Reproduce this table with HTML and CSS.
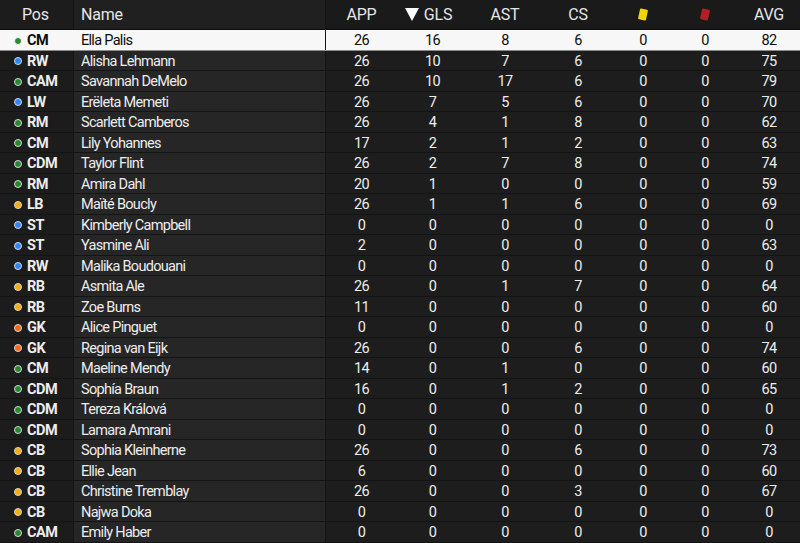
FILE: index.html
```html
<!DOCTYPE html>
<html>
<head>
<meta charset="utf-8">
<link rel="stylesheet" href="styles.css">
</head>
<body>
<div class="table">
  <div class="row head">
    <div class="c pos">Pos</div>
    <div class="c name">Name</div>
    <div class="c n">APP</div>
    <div class="c n sorted"><span class="tri"></span>GLS</div>
    <div class="c n">AST</div>
    <div class="c n">CS</div>
    <div class="c n"><span class="card yellow"></span></div>
    <div class="c n"><span class="card red"></span></div>
    <div class="c n">AVG</div>
  </div>
  <div class="row sel"><div class="c pos"><span class="dot g"></span>CM</div><div class="c name">Ella Palis</div><div class="c n">26</div><div class="c n">16</div><div class="c n">8</div><div class="c n">6</div><div class="c n">0</div><div class="c n">0</div><div class="c n">82</div></div>
  <div class="row"><div class="c pos"><span class="dot b"></span>RW</div><div class="c name">Alisha Lehmann</div><div class="c n">26</div><div class="c n">10</div><div class="c n">7</div><div class="c n">6</div><div class="c n">0</div><div class="c n">0</div><div class="c n">75</div></div>
  <div class="row"><div class="c pos"><span class="dot g"></span>CAM</div><div class="c name">Savannah DeMelo</div><div class="c n">26</div><div class="c n">10</div><div class="c n">17</div><div class="c n">6</div><div class="c n">0</div><div class="c n">0</div><div class="c n">79</div></div>
  <div class="row"><div class="c pos"><span class="dot b"></span>LW</div><div class="c name">Erëleta Memeti</div><div class="c n">26</div><div class="c n">7</div><div class="c n">5</div><div class="c n">6</div><div class="c n">0</div><div class="c n">0</div><div class="c n">70</div></div>
  <div class="row"><div class="c pos"><span class="dot g"></span>RM</div><div class="c name">Scarlett Camberos</div><div class="c n">26</div><div class="c n">4</div><div class="c n">1</div><div class="c n">8</div><div class="c n">0</div><div class="c n">0</div><div class="c n">62</div></div>
  <div class="row"><div class="c pos"><span class="dot g"></span>CM</div><div class="c name">Lily Yohannes</div><div class="c n">17</div><div class="c n">2</div><div class="c n">1</div><div class="c n">2</div><div class="c n">0</div><div class="c n">0</div><div class="c n">63</div></div>
  <div class="row"><div class="c pos"><span class="dot g"></span>CDM</div><div class="c name">Taylor Flint</div><div class="c n">26</div><div class="c n">2</div><div class="c n">7</div><div class="c n">8</div><div class="c n">0</div><div class="c n">0</div><div class="c n">74</div></div>
  <div class="row"><div class="c pos"><span class="dot g"></span>RM</div><div class="c name">Amira Dahl</div><div class="c n">20</div><div class="c n">1</div><div class="c n">0</div><div class="c n">0</div><div class="c n">0</div><div class="c n">0</div><div class="c n">59</div></div>
  <div class="row"><div class="c pos"><span class="dot y"></span>LB</div><div class="c name">Maïté Boucly</div><div class="c n">26</div><div class="c n">1</div><div class="c n">1</div><div class="c n">6</div><div class="c n">0</div><div class="c n">0</div><div class="c n">69</div></div>
  <div class="row"><div class="c pos"><span class="dot b"></span>ST</div><div class="c name">Kimberly Campbell</div><div class="c n">0</div><div class="c n">0</div><div class="c n">0</div><div class="c n">0</div><div class="c n">0</div><div class="c n">0</div><div class="c n">0</div></div>
  <div class="row"><div class="c pos"><span class="dot b"></span>ST</div><div class="c name">Yasmine Ali</div><div class="c n">2</div><div class="c n">0</div><div class="c n">0</div><div class="c n">0</div><div class="c n">0</div><div class="c n">0</div><div class="c n">63</div></div>
  <div class="row"><div class="c pos"><span class="dot b"></span>RW</div><div class="c name">Malika Boudouani</div><div class="c n">0</div><div class="c n">0</div><div class="c n">0</div><div class="c n">0</div><div class="c n">0</div><div class="c n">0</div><div class="c n">0</div></div>
  <div class="row"><div class="c pos"><span class="dot y"></span>RB</div><div class="c name">Asmita Ale</div><div class="c n">26</div><div class="c n">0</div><div class="c n">1</div><div class="c n">7</div><div class="c n">0</div><div class="c n">0</div><div class="c n">64</div></div>
  <div class="row"><div class="c pos"><span class="dot y"></span>RB</div><div class="c name">Zoe Burns</div><div class="c n">11</div><div class="c n">0</div><div class="c n">0</div><div class="c n">0</div><div class="c n">0</div><div class="c n">0</div><div class="c n">60</div></div>
  <div class="row"><div class="c pos"><span class="dot o"></span>GK</div><div class="c name">Alice Pinguet</div><div class="c n">0</div><div class="c n">0</div><div class="c n">0</div><div class="c n">0</div><div class="c n">0</div><div class="c n">0</div><div class="c n">0</div></div>
  <div class="row"><div class="c pos"><span class="dot o"></span>GK</div><div class="c name">Regina van Eijk</div><div class="c n">26</div><div class="c n">0</div><div class="c n">0</div><div class="c n">6</div><div class="c n">0</div><div class="c n">0</div><div class="c n">74</div></div>
  <div class="row"><div class="c pos"><span class="dot g"></span>CM</div><div class="c name">Maeline Mendy</div><div class="c n">14</div><div class="c n">0</div><div class="c n">1</div><div class="c n">0</div><div class="c n">0</div><div class="c n">0</div><div class="c n">60</div></div>
  <div class="row"><div class="c pos"><span class="dot g"></span>CDM</div><div class="c name">Sophía Braun</div><div class="c n">16</div><div class="c n">0</div><div class="c n">1</div><div class="c n">2</div><div class="c n">0</div><div class="c n">0</div><div class="c n">65</div></div>
  <div class="row"><div class="c pos"><span class="dot g"></span>CDM</div><div class="c name">Tereza Králová</div><div class="c n">0</div><div class="c n">0</div><div class="c n">0</div><div class="c n">0</div><div class="c n">0</div><div class="c n">0</div><div class="c n">0</div></div>
  <div class="row"><div class="c pos"><span class="dot g"></span>CDM</div><div class="c name">Lamara Amrani</div><div class="c n">0</div><div class="c n">0</div><div class="c n">0</div><div class="c n">0</div><div class="c n">0</div><div class="c n">0</div><div class="c n">0</div></div>
  <div class="row"><div class="c pos"><span class="dot y"></span>CB</div><div class="c name">Sophia Kleinherne</div><div class="c n">26</div><div class="c n">0</div><div class="c n">0</div><div class="c n">6</div><div class="c n">0</div><div class="c n">0</div><div class="c n">73</div></div>
  <div class="row"><div class="c pos"><span class="dot y"></span>CB</div><div class="c name">Ellie Jean</div><div class="c n">6</div><div class="c n">0</div><div class="c n">0</div><div class="c n">0</div><div class="c n">0</div><div class="c n">0</div><div class="c n">60</div></div>
  <div class="row"><div class="c pos"><span class="dot y"></span>CB</div><div class="c name">Christine Tremblay</div><div class="c n">26</div><div class="c n">0</div><div class="c n">0</div><div class="c n">3</div><div class="c n">0</div><div class="c n">0</div><div class="c n">67</div></div>
  <div class="row"><div class="c pos"><span class="dot y"></span>CB</div><div class="c name">Najwa Doka</div><div class="c n">0</div><div class="c n">0</div><div class="c n">0</div><div class="c n">0</div><div class="c n">0</div><div class="c n">0</div><div class="c n">0</div></div>
  <div class="row"><div class="c pos"><span class="dot g"></span>CAM</div><div class="c name">Emily Haber</div><div class="c n">0</div><div class="c n">0</div><div class="c n">0</div><div class="c n">0</div><div class="c n">0</div><div class="c n">0</div><div class="c n">0</div></div>
</div>
</body>
</html>
```
FILE: styles.css
```css
html, body {
  margin: 0;
  padding: 0;
  background: #1b1b1b;
}
body {
  font-family: Roboto, "Liberation Sans", sans-serif;
  color: #ededed;
  width: 800px;
  height: 543px;
  overflow: hidden;
}
.table {
  display: flex;
  flex-direction: column;
}
.row {
  display: grid;
  grid-template-columns: 73px 252px 72px 71px 74px 72px 58px 66px 62px;
  height: 20.5px;
  box-sizing: border-box;
  border-bottom: 1px solid #141414;
  font-size: 14.5px;
  letter-spacing: -0.7px;
}
.c {
  display: flex;
  align-items: center;
  background: #1d1d1d;
  white-space: nowrap;
  box-sizing: border-box;
  padding-top: 2px;
}
.c.name {
  background: #262626;
  padding-left: 7px;
  border-left: 1px solid #151515;
}
.c.pos {
  padding-left: 14px;
  font-weight: 700;
  background: #1c1c1c;
  letter-spacing: -0.5px;
}
.c.n {
  justify-content: center;
}
.row .c:nth-child(3) {
  border-left: 1px solid #141414;
}
.head {
  height: 30px;
  font-size: 16px;
  letter-spacing: -0.2px;
  border-bottom: 1px solid #0e0e0e;
}
.head .c {
  background: #1a1a1a;
  color: #e6e6e6;
  padding-top: 0;
}
.head .c.pos {
  font-weight: 400;
  padding-left: 22px;
  background: #1c1c1c;
  letter-spacing: -0.2px;
}
.head .c.name {
  background: #202020;
}
.tri {
  width: 0;
  height: 0;
  border-left: 7px solid transparent;
  border-right: 7px solid transparent;
  border-top: 13px solid #fafafa;
  margin-right: 5px;
  margin-left: -8px;
}
.card {
  display: inline-block;
  width: 8px;
  height: 11px;
  transform: rotate(12deg);
  border-radius: 1px;
}
.card.yellow { background: #f2d400; }
.card.red { background: #b51f22; }
.dot {
  width: 6px;
  height: 6px;
  border-radius: 50%;
  border: 1px solid #d8d8d8;
  margin-right: 5px;
  flex: none;
}
.dot.g { background: #26892f; }
.dot.b { background: #2b86ff; }
.dot.y { background: #f3ad0f; }
.dot.o { background: #f06a1a; }
.sel .c {
  background: #f7f7f7;
  color: #0c0c0c;
}
.sel .c.name { border-left-color: #f7f7f7; }
.sel .dot { border-color: #f7f7f7; }
.sel { border-bottom: 1px solid #8a8a8a; }
```
